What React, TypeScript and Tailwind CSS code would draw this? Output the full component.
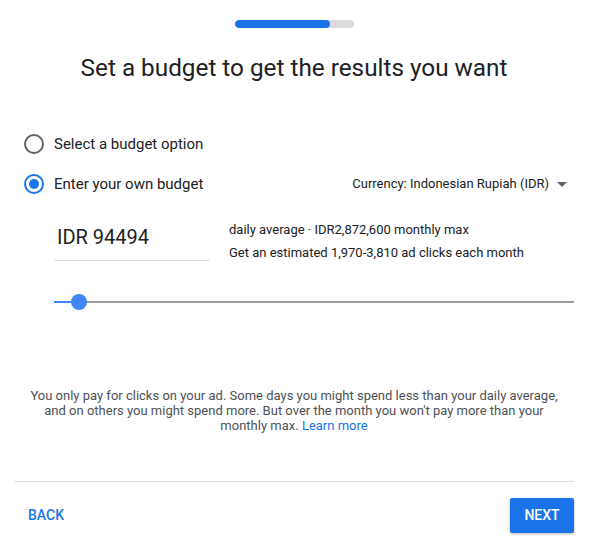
import { useState } from "react";

function Radio({ checked, label }: { checked: boolean; label: string }) {
  return (
    <label className="flex h-[20px] items-center gap-[10px] cursor-pointer">
      <span
        className={
          checked
            ? "flex h-[20px] w-[20px] items-center justify-center rounded-full border-2 border-[#1a73e8]"
            : "flex h-[20px] w-[20px] items-center justify-center rounded-full border-2 border-[#5f6368]"
        }
      >
        {checked && <span className="h-[10px] w-[10px] rounded-full bg-[#1a73e8]" />}
      </span>
      <span className="text-[15px] leading-[20px] text-[#202124]">{label}</span>
    </label>
  );
}

function BudgetSlider() {
  const [pos] = useState(25);
  return (
    <div className="relative mt-[33px] h-[16px] w-full">
      <div className="absolute left-0 right-0 top-[7px] h-[2px] bg-[#9e9e9e]" />
      <div className="absolute left-0 top-[7px] h-[2px] bg-[#4285f4]" style={{ width: pos }} />
      <div
        className="absolute top-0 h-[16px] w-[16px] rounded-full bg-[#4285f4]"
        style={{ left: pos - 8 }}
      />
    </div>
  );
}

export default function App() {
  return (
    <div className="w-[574px] bg-white pl-[14px] font-['Roboto',sans-serif] text-[#202124]">
      <div className="flex flex-col">
        {/* progress */}
        <div className="mx-auto mt-[20px] flex h-[8px] w-[119px] overflow-hidden rounded-full bg-[#dadce0]">
          <div className="w-[95px] rounded-full bg-[#1a73e8]" />
        </div>

        <h1 className="mt-[26px] text-center text-[24.3px] leading-[28px] text-[#202124]">
          Set a budget to get the results you want
        </h1>

        <div className="mt-[52px] flex flex-col gap-[20px] pl-[10px]">
          <Radio checked={false} label="Select a budget option" />
          <div className="flex h-[20px] items-center justify-between">
            <Radio checked label="Enter your own budget" />
            <button className="flex items-center gap-[8px] pr-[7px] text-[13px] leading-[20px] text-[#202124]">
              Currency: Indonesian Rupiah (IDR)
              <svg width="10" height="5" viewBox="0 0 10 5">
                <path d="M0 0l5 5 5-5z" fill="#5f6368" />
              </svg>
            </button>
          </div>
        </div>

        <div className="mt-[20px] flex pl-[40px]">
          <div className="w-[156px] border-b border-[#dadce0] pb-[5px] pl-[3px] pt-[9px] text-[20px] leading-[28px]">
            IDR 94494
          </div>
          <div className="ml-[19px] flex flex-col gap-[7px] pt-[8px] text-[13px] leading-[16px] text-[#202124]">
            <span>daily average · IDR2,872,600 monthly max</span>
            <span>Get an estimated 1,970-3,810 ad clicks each month</span>
          </div>
        </div>

        <div className="pl-[40px]">
          <BudgetSlider />
        </div>

        <p className="mx-auto mt-[78px] w-[535px] text-center text-[13px] leading-[15px] text-[#4d5156]">
          You only pay for clicks on your ad. Some days you might spend less than your daily average,
          and on others you might spend more. But over the month you won't pay more than your monthly
          max. <span className="text-[#1a73e8]">Learn more</span>
        </p>

        <div className="mt-[48px] h-px w-full bg-[#dadce0]" />

        <div className="flex items-center justify-between pb-[16px] pt-[15px]">
          <button className="rounded-[2px] px-[14px] py-[8px] text-[14px] font-medium leading-[20px] text-[#1a73e8]">
            BACK
          </button>
          <button className="h-[35px] w-[64px] rounded-[2px] bg-[#1a73e8] text-[14px] font-medium text-white shadow-[0_1px_3px_rgba(0,0,0,0.3)]">
            NEXT
          </button>
        </div>
      </div>
    </div>
  );
}
